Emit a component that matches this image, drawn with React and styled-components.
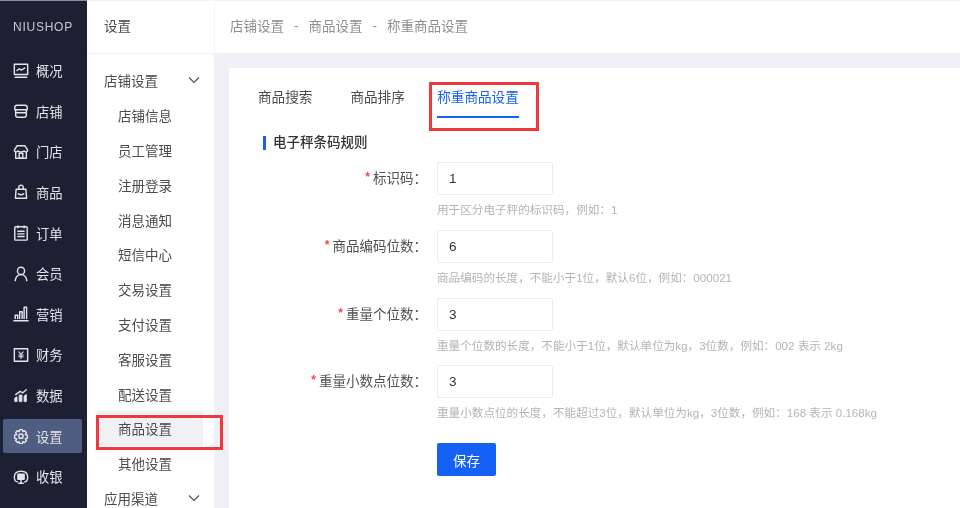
import React from 'react';
import styled, { createGlobalStyle } from 'styled-components';

const Global = createGlobalStyle`
  html, body { margin: 0; padding: 0; height: 100%; overflow: hidden; background: #eef0f5; }
  * { box-sizing: border-box; }
  body { font-family: "Liberation Sans", "Noto Sans CJK SC", sans-serif; }
  #root { height: 508px; }
`;

const Page = styled.div`
  position: relative;
  display: flex;
  width: 960px;
  height: 508px;
  overflow: hidden;
  filter: blur(0.35px);
`;
const Rail = styled.nav`
  width: 87px;
  flex: none;
  background: #1c2033;
  border-top: 1px solid #8a8d96;
  display: flex;
  flex-direction: column;
`;
const Logo = styled.div`
  height: 49.4px;
  flex: none;
  padding: 3px 0 0 13px;
  display: flex;
  align-items: center;
  color: #c9cbd2;
  font-size: 12px;
  letter-spacing: 0.75px;
`;
const RailItem = styled.div`
  height: 34.6px;
  flex: none;
  display: flex;
  align-items: center;
  gap: 7px;
  margin: 3px 5px 3px 3px;
  padding-left: 10px;
  border-radius: 2px;
  color: #e4e5e9;
  font-size: 13.3px;
  background: ${p => (p.$active ? '#505d82' : 'transparent')};
  svg { width: 16px; height: 16px; flex: none; }
`;
const SubNav = styled.aside`
  width: 127px;
  flex: none;
  background: #fff;
  display: flex;
  flex-direction: column;
  border-top: 1px solid #f3f4f6;
`;
const SubTitle = styled.div`
  height: 53px;
  flex: none;
  padding: 0 0 4px 17px;
  display: flex;
  align-items: center;
  font-size: 13.5px;
  color: #4a4a4a;
  border-bottom: 1px solid #f1f2f5;
`;
const SubList = styled.div`
  padding-top: 9px;
  display: flex;
  flex-direction: column;
`;
const SubGroup = styled.div`
  height: 34.8px;
  flex: none;
  padding: 0 13px 0 17px;
  display: flex;
  align-items: center;
  justify-content: space-between;
  font-size: 13.5px;
  color: #4c4c4c;
  svg { width: 14px; height: 14px; }
`;
const SubItem = styled.div`
  height: 34.8px;
  flex: none;
  margin-left: 10px;
  margin-right: 11px;
  padding-left: 21px;
  display: flex;
  align-items: center;
  font-size: 13.5px;
  color: #4c4c4c;
  background: ${p => (p.$active ? '#f0f1f5' : 'transparent')};
`;
const Main = styled.main`
  flex: 1;
  min-width: 0;
  display: flex;
  flex-direction: column;
  border-left: 1px solid #f3f4f6;
`;
const Header = styled.header`
  height: 53px;
  flex: none;
  background: #fff;
  border-top: 1px solid #f3f4f6;
  padding: 0 0 4px 15px;
  display: flex;
  align-items: center;
  gap: 10px;
  font-size: 13.5px;
  color: #8f8f8f;
`;
const Content = styled.div`
  flex: 1;
  padding: 15px 0 0 14px;
  background: #eef0f5;
  display: flex;
`;
const Card = styled.section`
  flex: 1;
  background: #fff;
  padding: 0 0 0 29px;
`;
const Tabs = styled.div`
  display: flex;
  gap: 38px;
  height: 51px;
`;
const Tab = styled.div`
  height: 50px;
  padding-top: 21px;
  font-size: 13.6px;
  line-height: 18px;
  margin-left: ${p => (p.$active ? '-5.500px' : '0')};
  color: ${p => (p.$active ? '#1560f5' : '#4c4c4c')};
  border-bottom: ${p => (p.$active ? '2px solid #1560f5' : 'none')};
`;
const SectionTitle = styled.h3`
  margin: 17px 0 0 5px;
  height: 14px;
  border-left: 3px solid #1560f5;
  padding-left: 7px;
  font-size: 13.5px;
  line-height: 14px;
  font-weight: 500;
  color: #333;
`;
const Form = styled.div`
  margin-top: 12px;
  display: flex;
  flex-direction: column;
`;
const Row = styled.div`
  height: 67.8px;
  flex: none;
  display: grid;
  grid-template-columns: 169px 1fr;
  column-gap: 10px;
`;
const Label = styled.label`
  height: 33px;
  display: flex;
  align-items: center;
  justify-content: flex-end;
  padding-bottom: 3px;
  font-size: 13.5px;
  color: #505050;
  b { color: #f5484d; font-weight: 700; margin-right: 3px; font-size: 12px; }
`;
const Field = styled.div`
  display: flex;
  flex-direction: column;
`;
const Input = styled.div`
  width: 116px;
  height: 33px;
  flex: none;
  border: 1px solid #ececee;
  border-radius: 2px;
  padding-left: 11px;
  display: flex;
  align-items: center;
  font-size: 13.5px;
  color: #333;
`;
const Hint = styled.div`
  margin-top: 8px;
  font-size: 11.6px;
  line-height: 14px;
  color: #b4b4b4;
  white-space: nowrap;
`;
const Save = styled.button`
  display: block;
  margin: 10px 0 0 179px;
  width: 59px;
  height: 33px;
  border: none;
  border-radius: 2px;
  background: #1560f5;
  color: #fff;
  font: inherit;
  font-size: 13.5px;
`;
const RedBox = styled.div`
  position: absolute;
  border: 3px solid #f0393e;
  pointer-events: none;
`;
const TabMark = styled(RedBox)`left: 429px; top: 82px; width: 110px; height: 49px;`;
const MenuMark = styled(RedBox)`left: 96px; top: 415px; width: 127px; height: 35px;`;

const stroke = { fill: 'none', stroke: 'currentColor', strokeWidth: 1.6, strokeLinecap: 'round', strokeLinejoin: 'round' };
const Icon = ({ children }) => <svg viewBox="0 0 18 18" {...stroke}>{children}</svg>;

const icons = {
  chart: <Icon><rect x="1.5" y="1.500" width="15" height="11.500" /><path d="M4.500 8.500l2.600-2 2.600 1.400 3.400-2.200" /><path d="M2.500 16h13" /></Icon>,
  store: <Icon><path d="M4.500 2.500h9c1.500 0 2.500 1 2.500 2.500v2.500H2V5c0-1.500 1-2.500 2.500-2.500z" /><path d="M3 7.500v6a2.500 2.500 0 0 0 2.500 2.500h7a2.500 2.500 0 0 0 2.500-2.500v-6" /><path d="M3 11h12" /></Icon>,
  shop: <Icon><path d="M4.500 2h9L16.500 7c0 2-3 2.500-4 .8-1 1.700-6 1.700-7 0-1 1.700-4 1.200-4-.8z" /><path d="M3 9.500V16h12V9.500" /><rect x="7" y="10.500" width="4" height="5.500" /></Icon>,
  bag: <Icon><path d="M3.500 6h11l.8 10H2.700z" /><path d="M6.500 6V3.800a2.500 2.500 0 0 1 5 0V6" /><path d="M6 11c1.200 1.500 4.800 1.500 6 0" /></Icon>,
  list: <Icon><rect x="2" y="2" width="14" height="15" rx="1" /><path d="M5.500 1v2M12.500 1v2M5.500 7h7M5.500 10h7M5.500 13h7" /></Icon>,
  user: <Icon><circle cx="9" cy="5.500" r="4" /><path d="M2.500 16.500c.4-4 3-7 6.500-7s6.100 3 6.500 7" /></Icon>,
  bars: <Icon><path d="M1 16.500h16M2.500 14v-3.500h2.800V14M7.500 14V6.500h2.800V14M12.500 14V1.500h2.800V14" /></Icon>,
  money: <Icon><path d="M1.500 2h15v14h-15z" /><path d="M6.500 5.500L9 8l2.500-2.500M9 8v5M6.500 9h5M6.500 11h5" strokeWidth="1.200" /></Icon>,
  data: <Icon><path d="M2 16v-3.500l2.500-1.500v5zM7 16V9h3v7zM12.500 16v-6l2.500-1.500V16z" fill="currentColor" strokeWidth="1" /><path d="M3 8.500l5-3.500 3 1.500L15 3" /></Icon>,
  gear: <Icon><path d="M7.500 1.800h3l.6 2.200 2-.9 2 2.300-1.200 1.900 2.300.9v3.200l-2.300.8 1.200 2-2 2.200-2-1-.6 2.300h-3l-.6-2.300-2 1-2-2.200 1.200-2-2.300-.8V8.200l2.300-.9-1.200-1.900 2-2.300 2 .9z" /><circle cx="9" cy="9.200" r="2.400" /></Icon>,
  cash: <Icon><path d="M5 14.500C2.500 14.500 1.500 12 1.500 9 1.500 5 4 2.500 9 2.500S16.500 5 16.500 9c0 3-1 5.500-3.500 5.500" /><path d="M5.500 6h7v5.500h-7zM9 11.500v4M6.500 16h5" fill="currentColor" /></Icon>,
};

const rail = [
  ['chart', '概况'], ['store', '店铺'], ['shop', '门店'], ['bag', '商品'], ['list', '订单'], ['user', '会员'],
  ['bars', '营销'], ['money', '财务'], ['data', '数据'], ['gear', '设置', true], ['cash', '收银'],
];
const sub = ['店铺信息', '员工管理', '注册登录', '消息通知', '短信中心', '交易设置', '支付设置', '客服设置', '配送设置', '商品设置', '其他设置'];
const rows = [
  ['标识码：', '1', '用于区分电子秤的标识码，例如：1'],
  ['商品编码位数：', '6', '商品编码的长度，不能小于1位，默认6位，例如：000021'],
  ['重量个位数：', '3', '重量个位数的长度，不能小于1位，默认单位为kg，3位数，例如：002 表示 2kg'],
  ['重量小数点位数：', '3', '重量小数点位的长度，不能超过3位，默认单位为kg，3位数，例如：168 表示 0.168kg'],
];
const Chevron = () => (
  <svg viewBox="0 0 14 14" fill="none" stroke="currentColor" strokeWidth="1.100"><path d="M2 4.500l5 5 5-5" /></svg>
);

export default function App() {
  return (
    <Page>
      <Global />
      <Rail>
        <Logo>NIUSHOP</Logo>
        {rail.map(([icon, label, active]) => (
          <RailItem key={label} $active={active}>{icons[icon]}<span>{label}</span></RailItem>
        ))}
      </Rail>
      <SubNav>
        <SubTitle>设置</SubTitle>
        <SubList>
          <SubGroup>店铺设置<Chevron /></SubGroup>
          {sub.map(s => <SubItem key={s} $active={s === '商品设置'}>{s}</SubItem>)}
          <SubGroup>应用渠道<Chevron /></SubGroup>
        </SubList>
      </SubNav>
      <Main>
        <Header>
          <span>店铺设置</span><span>-</span><span>商品设置</span><span>-</span><span>称重商品设置</span>
        </Header>
        <Content>
          <Card>
            <Tabs>
              <Tab>商品搜索</Tab>
              <Tab>商品排序</Tab>
              <Tab $active>称重商品设置</Tab>
            </Tabs>
            <SectionTitle>电子秤条码规则</SectionTitle>
            <Form>
              {rows.map(([label, value, hint]) => (
                <Row key={label}>
                  <Label><b>*</b>{label}</Label>
                  <Field>
                    <Input>{value}</Input>
                    <Hint>{hint}</Hint>
                  </Field>
                </Row>
              ))}
            </Form>
            <Save>保存</Save>
          </Card>
        </Content>
      </Main>
      <TabMark />
      <MenuMark />
    </Page>
  );
}
